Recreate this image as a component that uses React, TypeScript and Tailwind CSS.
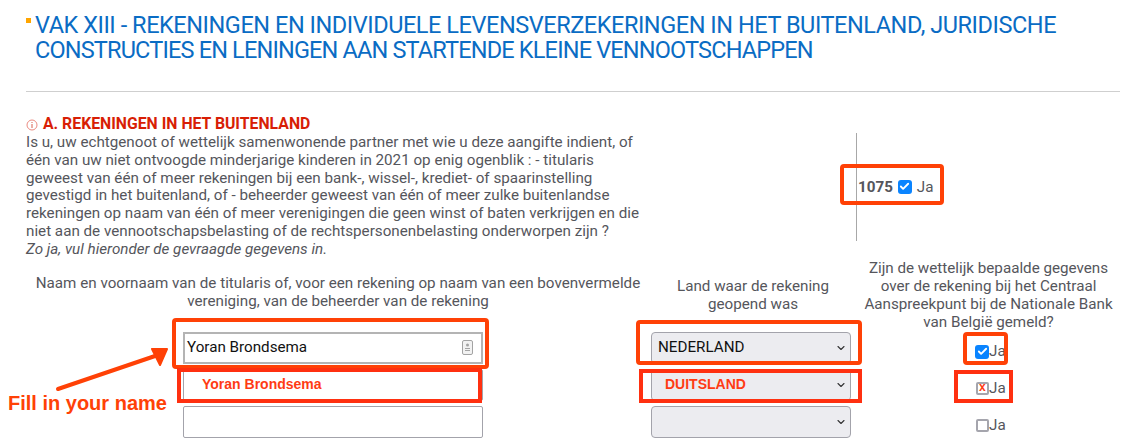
import { ChevronDown, Check } from "lucide-react";

const bodyFont = "font-['Roboto',sans-serif]";

function CountrySelect({ value, red }: { value?: string; red?: boolean }) {
  return (
    <div className="flex h-[32px] w-[200px] items-center justify-between rounded-[4px] border border-[#a3a3ab] bg-[#ececf0] pl-[6px] pr-[3px]">
      <span className={red ? "pl-[7px] font-['Liberation_Sans',sans-serif] text-[14px] font-bold text-[#ff3b14]" : "text-[15.2px] text-[#111]"}>
        {value}
      </span>
      <ChevronDown size={12} strokeWidth={2.2} className="text-[#333]" />
    </div>
  );
}

function JaBox({ state }: { state?: "checked" | "crossed" }) {
  return (
    <div className="relative mt-[8px] flex items-center text-[15.2px] text-[#55565c]">
      {state === "checked" ? (
        <span className="flex h-[14px] w-[14px] items-center justify-center rounded-[3px] bg-[#0a84ff]">
          <Check size={11} strokeWidth={4} className="text-white" />
        </span>
      ) : (
        <span className="ml-[1px] h-[13px] w-[13px] rounded-[2px] border-2 border-[#a5a5ad] bg-white" />
      )}
      {state === "crossed" && (
        <span className="absolute left-[4px] top-[1px] font-['Liberation_Sans',sans-serif] text-[12px] font-bold text-[#ff3b14]">x</span>
      )}
      <span>Ja</span>
    </div>
  );
}

export default function App() {
  return (
    <div className={`relative h-[443px] w-[1138px] overflow-hidden bg-white ${bodyFont}`}>
      <div className="px-[26px] pt-[13px]">
        {/* Title */}
        <div className="relative pl-[9px]">
          <span className="absolute left-0 top-[5px] h-[5px] w-[5px] bg-[#ffa500]" />
          <h1 className="whitespace-nowrap font-['Roboto',sans-serif] text-[23.5px] leading-[25px] tracking-[-0.45px] text-[#0a6cc4]">
            VAK XIII - REKENINGEN EN INDIVIDUELE LEVENSVERZEKERINGEN IN HET BUITENLAND, JURIDISCHE
            <br />
            <span className="tracking-[-0.83px]">CONSTRUCTIES EN LENINGEN AAN STARTENDE KLEINE VENNOOTSCHAPPEN</span>
          </h1>
        </div>
        <div className="mt-[28px] h-px w-[1094px] bg-[#cfcfcf]" />

        {/* Section A */}
        <div className="mt-[22px] flex">
          <div className="w-[620px]">
            <div className="flex items-center gap-[5px] text-[15.8px] font-bold leading-[20px] text-[#d81e05]">
              <svg width="12" height="12" viewBox="0 0 12 12" className="mt-[2px] shrink-0">
                <circle cx="6" cy="6" r="5" fill="none" stroke="#eb8a80" strokeWidth="1" />
                <rect x="5.5" y="5" width="1" height="4" fill="#d9604f" />
                <rect x="5.5" y="3" width="1" height="1" fill="#d9604f" />
              </svg>
              A. REKENINGEN IN HET BUITENLAND
            </div>
            <p className="whitespace-nowrap text-[15.2px] leading-[17.8px] text-[#55565c]">
              Is u, uw echtgenoot of wettelijk samenwonende partner met wie u deze aangifte indient, of
              <br />
              één van uw niet ontvoogde minderjarige kinderen in 2021 op enig ogenblik : - titularis
              <br />
              geweest van één of meer rekeningen bij een bank-, wissel-, krediet- of spaarinstelling
              <br />
              gevestigd in het buitenland, of - beheerder geweest van één of meer zulke buitenlandse
              <br />
              rekeningen op naam van één of meer verenigingen die geen winst of baten verkrijgen en die
              <br />
              niet aan de vennootschapsbelasting of de rechtspersonenbelasting onderworpen zijn ?
              <br />
              <em>Zo ja, vul hieronder de gevraagde gegevens in.</em>
            </p>
          </div>
          <div className="ml-[210px] mt-[19px] flex h-[108px] items-center self-start border-l border-[#a8a8a8] pl-[1px]">
            <div className="flex items-center text-[15.2px] text-[#55565c]">
              <b className="font-bold">1075</b>
              <span className="ml-[5px] flex h-[14px] w-[14px] items-center justify-center rounded-[3px] bg-[#0a84ff]">
                <Check size={11} strokeWidth={4} className="text-white" />
              </span>
              <span className="ml-[5px]">Ja</span>
            </div>
          </div>
        </div>

        {/* Table header */}
        <div className="flex text-center text-[15.2px] leading-[18.3px] text-[#55565c]">
          <div className="flex w-[624px] shrink-0 items-end justify-center pb-[21px]">
            <p className="whitespace-nowrap">
              Naam en voornaam van de titularis of, voor een rekening op naam van een bovenvermelde
              <br />
              vereniging, van de beheerder van de rekening
            </p>
          </div>
          <div className="flex w-[206px] shrink-0 items-end justify-center pb-[18px]">
            <p className="whitespace-nowrap">
              Land waar de rekening
              <br />
              geopend was
            </p>
          </div>
          <div className="w-[265px] shrink-0">
            <p className="whitespace-nowrap">
              Zijn de wettelijk bepaalde gegevens
              <br />
              over de rekening bij het Centraal
              <br />
              Aanspreekpunt bij de Nationale Bank
              <br />
              van België gemeld?
            </p>
          </div>
        </div>

        {/* Rows */}
        <div className="flex flex-col gap-[5px] pl-[157px]">
          <div className="flex h-[32px] items-center">
            <div className="flex h-[32px] w-[300px] items-center justify-between border-2 border-[#b4b4b4] bg-white pl-[2px] pr-[8px] text-[15.2px] text-[#111]">
              Yoran Brondsema
              <svg width="11" height="15" viewBox="0 0 11 15">
                <rect x="0.5" y="0.5" width="10" height="14" rx="1.5" fill="#f2f2f2" stroke="#a3a3a3" />
                <circle cx="5.5" cy="5" r="1.5" fill="#a3a3a3" />
                <rect x="3" y="8" width="5" height="1" fill="#a3a3a3" />
                <rect x="3" y="10" width="5" height="1" fill="#a3a3a3" />
              </svg>
            </div>
            <div className="ml-[168px]"><CountrySelect value="NEDERLAND" /></div>
            <div className="ml-[124px]"><JaBox state="checked" /></div>
          </div>
          <div className="flex h-[32px] items-center">
            <div className="flex h-[32px] w-[300px] items-center rounded-[2px] border border-[#a3a3ab] bg-white pl-[18px] font-['Liberation_Sans',sans-serif] text-[14px] font-bold text-[#ff3b14]">
              Yoran Brondsema
            </div>
            <div className="ml-[168px]"><CountrySelect value="DUITSLAND" red /></div>
            <div className="ml-[124px]"><JaBox state="crossed" /></div>
          </div>
          <div className="flex h-[32px] items-center">
            <div className="h-[32px] w-[300px] rounded-[2px] border border-[#a3a3ab] bg-white" />
            <div className="ml-[168px]"><CountrySelect /></div>
            <div className="ml-[124px]"><JaBox /></div>
          </div>
        </div>
      </div>

      {/* Annotations drawn over the form */}
      <div className="absolute left-[840px] top-[164px] h-[41px] w-[104px] rounded-[4px] border-[4px] border-[#ff4106]" />
      <div className="absolute left-[172px] top-[318px] h-[51px] w-[317px] rounded-[4px] border-[4px] border-[#ff4106]" />
      <div className="absolute left-[177px] top-[368px] h-[35px] w-[305px] border-[4px] border-[#ff3010]" />
      <div className="absolute left-[636px] top-[320px] h-[45px] w-[226px] rounded-[4px] border-[4px] border-[#ff4106]" />
      <div className="absolute left-[639px] top-[369px] h-[34px] w-[223px] border-[4px] border-[#ff3010]" />
      <div className="absolute left-[963px] top-[332px] h-[33px] w-[45px] rounded-[4px] border-[4px] border-[#ff4106]" />
      <div className="absolute left-[954px] top-[370px] h-[33px] w-[59px] border-[4px] border-[#ff3010]" />
      <svg className="absolute left-[50px] top-[340px]" width="125" height="55" viewBox="0 0 125 55">
        <path d="M8 49 L108 15" stroke="#ff4106" strokeWidth="4" strokeLinecap="round" />
        <path d="M102 9 L117 9 L110 25 Z" fill="#ff4106" stroke="#ff4106" strokeWidth="2" strokeLinejoin="round" />
      </svg>
      <div className="absolute left-[8px] top-[391px] font-['Liberation_Sans',sans-serif] text-[20px] font-bold leading-[24px] text-[#ff4106]">
        Fill in your name
      </div>
    </div>
  );
}
